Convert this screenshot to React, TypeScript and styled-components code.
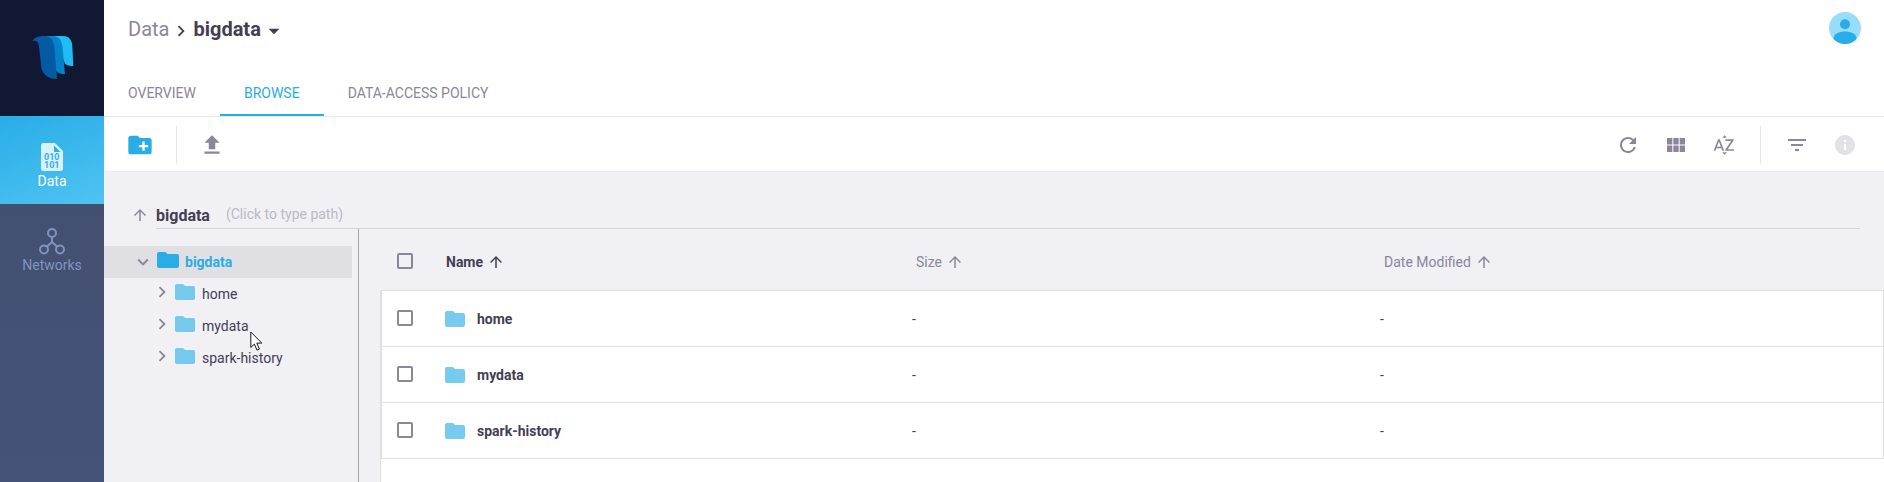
import React from "react";
import styled, { createGlobalStyle } from "styled-components";
import {
  MdArrowDropDown,
  MdArrowUpward,
  MdChevronRight,
  MdCreateNewFolder,
  MdExpandMore,
  MdFileUpload,
  MdFilterList,
  MdFolder,
  MdInfo,
  MdRefresh,
  MdSortByAlpha,
  MdViewModule,
} from "react-icons/md";

const color = {
  navy: "#111833",
  blue: "#28ade6",
  folder: "#74c9ec",
  text: "#433e53",
  muted: "#8b8698",
  faint: "#bbb9c5",
  line: "#dfdfe3",
  page: "#f0f0f5",
};

const GlobalStyle = createGlobalStyle`
  *, *::before, *::after { box-sizing: border-box; }
  body {
    margin: 0;
    background: ${color.page};
    color: ${color.text};
    font-family: Roboto, "Liberation Sans", sans-serif;
    font-size: 14px;
    line-height: 20px;
  }
  button { border: 0; padding: 0; background: none; color: inherit; font: inherit; cursor: pointer; }
  a { color: inherit; text-decoration: none; }
  svg { display: block; flex: none; }
`;

const Shell = styled.div`
  display: flex;
  min-height: 100vh;
`;

const Sidebar = styled.nav`
  flex: none;
  width: 104px;
  background: linear-gradient(180deg, #424f6e 30%, #455379 100%);
`;

const Brand = styled.a`
  display: flex;
  align-items: center;
  justify-content: center;
  height: 116px;
  padding-left: 2px;
  background: ${color.navy};
`;

const SideLink = styled.a<{ $active?: boolean }>`
  display: flex;
  flex-direction: column;
  align-items: center;
  justify-content: center;
  height: ${(p) => (p.$active ? 88 : 80)}px;
  padding-top: 14px;
  color: ${(p) => (p.$active ? "#fff" : "#8193bd")};
  background: ${(p) => (p.$active ? "linear-gradient(160deg, #28ade6, #4fc3f3)" : "none")};
`;

const Main = styled.main`
  display: flex;
  flex: 1;
  flex-direction: column;
  min-width: 0;
`;

const Header = styled.header`
  display: flex;
  flex-direction: column;
  justify-content: space-between;
  height: 117px;
  border-bottom: 1px solid #e9e9ec;
  background: #fff;
`;

const TitleRow = styled.div`
  display: flex;
  align-items: center;
  justify-content: space-between;
  height: 56px;
  padding: 0 23px 0 24px;
`;

const Breadcrumb = styled.div`
  display: flex;
  align-items: center;
  gap: 1px;
  padding-top: 1px;
  font-size: 20px;
  line-height: 28px;

  > svg { margin-top: 4px; }
`;

const Parent = styled.a`
  color: ${color.muted};
`;

const Current = styled.button`
  display: flex;
  align-items: center;
  font-weight: 700;

  svg { margin-top: 4px; }
`;

const Tabs = styled.nav`
  display: flex;
`;

const Tab = styled.a<{ $active?: boolean }>`
  height: 36px;
  padding: 3px 24px 0;
  border-bottom: 2px solid ${(p) => (p.$active ? color.blue : "transparent")};
  color: ${(p) => (p.$active ? color.blue : color.muted)};
`;

const Toolbar = styled.div`
  display: flex;
  align-items: center;
  justify-content: space-between;
  height: 55px;
  padding: 2px 27px 0 22px;
  border-bottom: 1px solid #ebebef;
  background: #fff;
`;

const ToolGroup = styled.div<{ $gap: number }>`
  display: flex;
  align-items: center;
  gap: ${(p) => p.$gap}px;
`;

const Tool = styled.button<{ $tint?: string }>`
  color: ${(p) => p.$tint || color.muted};
`;

const Divider = styled.span`
  width: 1px;
  height: 38px;
  background: #e6e6ea;
`;

const PathBar = styled.div`
  display: flex;
  height: 57px;
  padding: 0 24px 0 27px;
  gap: 7px;
`;

const UpButton = styled.button`
  align-self: flex-end;
  padding-bottom: 5px;
  color: ${color.muted};
`;

const PathField = styled.button`
  display: flex;
  flex: 1;
  align-items: flex-end;
  gap: 16px;
  border-bottom: 1px solid #d5d5da;
  text-align: left;
`;

const PathName = styled.span`
  padding-bottom: 2px;
  font-size: 16px;
  font-weight: 700;
`;

const PathHint = styled.span`
  padding-bottom: 4px;
  color: ${color.faint};
`;

const Split = styled.div`
  display: flex;
  flex: 1;
`;

const TreePane = styled.aside`
  flex: none;
  width: 255px;
  padding: 17px 6px 0 0;
  border-right: 1px solid #a4a2ae;
`;

const TreeRow = styled.button<{ $root?: boolean }>`
  display: flex;
  align-items: center;
  width: 100%;
  height: 32px;
  padding-left: ${(p) => (p.$root ? 28 : 47)}px;
  background: ${(p) => (p.$root ? "#e0e0e4" : "none")};
  color: ${(p) => (p.$root ? color.blue : color.text)};
  font-weight: ${(p) => (p.$root ? 700 : 400)};
`;

const TreeToggle = styled.span<{ $root?: boolean }>`
  margin-right: ${(p) => (p.$root ? 1 : 0)}px;
  padding-bottom: ${(p) => (p.$root ? 0 : 4)}px;
  color: ${color.muted};
`;

const TreeFolder = styled.span<{ $root?: boolean }>`
  margin-right: ${(p) => (p.$root ? 4 : 5)}px;
  padding-bottom: 4px;
  color: ${(p) => (p.$root ? color.blue : color.folder)};
`;

const ListPane = styled.section`
  display: flex;
  flex: 1;
  flex-direction: column;
  min-width: 0;
  padding-left: 21px;
`;

const Table = styled.table`
  width: 100%;
  table-layout: fixed;
  border-spacing: 0;

  th, td { padding: 0 0 0 14px; text-align: left; }
  th { height: 62px; padding-top: 4px; border-bottom: 1px solid ${color.line}; font-weight: 400; }
  td { height: 56px; border-bottom: 1px solid ${color.line}; background: #fff; }
  td:first-child { padding-left: 15px; border-left: 2px solid ${color.line}; }
  th:first-child { padding-left: 17px; }
  td:last-child { border-right: 1px solid ${color.line}; }
`;

const Filler = styled.div`
  flex: 1;
  border-left: 1px solid ${color.line};
  background: #fff;
`;

const CheckBox = styled.input`
  display: block;
  width: 16px;
  height: 16px;
  margin: 0 0 2px;
  border: 2px solid ${color.muted};
  border-radius: 2px;
  appearance: none;
`;

const SortButton = styled.button<{ $active?: boolean }>`
  display: flex;
  align-items: center;
  gap: 4px;
  padding-left: ${(p) => (p.$active ? 2 : 4)}px;
  color: ${(p) => (p.$active ? color.text : color.muted)};
  font-weight: ${(p) => (p.$active ? 700 : 400)};
`;

const FileLink = styled.a`
  display: flex;
  align-items: center;
  gap: 10px;
  margin-left: -1px;
  font-weight: 700;

  svg { color: #76cbee; }
`;

const Pointer = styled.svg`
  position: absolute;
  top: 331px;
  left: 250px;
  pointer-events: none;
`;

const Logo = () => (
  <svg width="42" height="44" viewBox="0 0 42 44" aria-hidden="true">
    <path d="M21 0h10c6 0 9 4 9.300 10l1 20c-5 .3-8-1-9-4z" fill="#1fbdf5" />
    <path d="M12 .5C14 0 18 0 21 0c6 0 9 5 9.500 11l2.500 27c-6 0-9-2-11-6z" fill="#0381c9" />
    <path d="M0 5C3 1 7 0 12 0c7 0 10 5 10.500 12L25 43C15 43 9 37 9 28L7 11C6.600 6 5 4 0 5z" fill="#045ba3" />
  </svg>
);

const DataIcon = () => (
  <svg width="22" height="28" viewBox="0 0 22 28" aria-hidden="true">
    <path d="M2.500 0H14l8 8v17.500a2.500 2.500 0 0 1-2.500 2.500h-17A2.500 2.500 0 0 1 0 25.500v-23A2.500 2.500 0 0 1 2.500 0z" fill="#d9f1fc" />
    <path d="M13 2.500 19.500 9H13z" fill="#2eb1e8" />
    <g fill="#31b2e9" fontFamily="Roboto, sans-serif" fontWeight="700" fontSize="9">
      <text x="3" y="17">010</text>
      <text x="3" y="25">101</text>
    </g>
  </svg>
);

const NetworkIcon = () => (
  <svg width="26" height="27" viewBox="0 0 26 27" fill="none" stroke="currentColor" strokeWidth="2" aria-hidden="true">
    <circle cx="13" cy="5" r="4" />
    <circle cx="5" cy="21.500" r="4" />
    <circle cx="21" cy="21.500" r="4" />
    <path d="M13 9v5.500M8 18.500l5-4.500 5 4.500" />
  </svg>
);

const Avatar = () => (
  <svg width="32" height="32" viewBox="0 0 32 32" aria-hidden="true">
    <circle cx="16" cy="16" r="16" fill="#97dcf8" />
    <circle cx="16" cy="12.300" r="5" fill="#28ade6" />
    <path d="M4.500 27C4.500 22 10 19.600 16 19.600S27.600 22 27.600 27A16 16 0 0 1 4.500 27z" fill="#28ade6" />
  </svg>
);

const RootFolder = () => (
  <svg width="26" height="24" viewBox="0 0 26 24" fill="currentColor" aria-hidden="true">
    <path d="M4 4h6.500l2 2H22a2 2 0 0 1 2 2v10a2 2 0 0 1-2 2H4a2 2 0 0 1-2-2V6a2 2 0 0 1 2-2z" />
  </svg>
);

const folders = ["home", "mydata", "spark-history"];

export default function App() {
  return (
    <>
      <GlobalStyle />
      <Shell>
        <Sidebar>
          <Brand href="#" aria-label="Dashboard"><Logo /></Brand>
          <SideLink href="#data" $active><DataIcon />Data</SideLink>
          <SideLink href="#networks"><NetworkIcon />Networks</SideLink>
        </Sidebar>
        <Main>
          <Header>
            <TitleRow>
              <Breadcrumb>
                <Parent href="#data">Data</Parent>
                <MdChevronRight size={22} />
                <Current>bigdata<MdArrowDropDown size={26} /></Current>
              </Breadcrumb>
              <button aria-label="Account"><Avatar /></button>
            </TitleRow>
            <Tabs>
              <Tab href="#overview">OVERVIEW</Tab>
              <Tab href="#browse" $active>BROWSE</Tab>
              <Tab href="#policy">DATA-ACCESS POLICY</Tab>
            </Tabs>
          </Header>
          <Toolbar>
            <ToolGroup $gap={22}>
              <Tool aria-label="New folder" $tint={color.blue}><MdCreateNewFolder size={28} /></Tool>
              <Divider />
              <Tool aria-label="Upload"><MdFileUpload size={26} /></Tool>
            </ToolGroup>
            <ToolGroup $gap={24}>
              <Tool aria-label="Refresh"><MdRefresh size={24} /></Tool>
              <Tool aria-label="Grid view"><MdViewModule size={24} /></Tool>
              <Tool aria-label="Sort by name"><MdSortByAlpha size={24} /></Tool>
              <Divider />
              <Tool aria-label="Filter"><MdFilterList size={24} /></Tool>
              <Tool aria-label="Details" $tint="#e2e2e6"><MdInfo size={24} /></Tool>
            </ToolGroup>
          </Toolbar>
          <PathBar>
            <UpButton aria-label="Up one level"><MdArrowUpward size={18} /></UpButton>
            <PathField>
              <PathName>bigdata</PathName>
              <PathHint>(Click to type path)</PathHint>
            </PathField>
          </PathBar>
          <Split>
            <TreePane>
              <TreeRow $root>
                <TreeToggle $root><MdExpandMore size={22} /></TreeToggle>
                <TreeFolder $root><RootFolder /></TreeFolder>
                bigdata
              </TreeRow>
              {folders.map((name) => (
                <TreeRow key={name}>
                  <TreeToggle><MdChevronRight size={22} /></TreeToggle>
                  <TreeFolder><MdFolder size={24} /></TreeFolder>
                  {name}
                </TreeRow>
              ))}
            </TreePane>
            <ListPane>
              <Table>
                <colgroup>
                  <col style={{ width: 50 }} />
                  <col />
                  <col />
                  <col />
                  <col style={{ width: 50 }} />
                </colgroup>
                <thead>
                  <tr>
                    <th><CheckBox type="checkbox" aria-label="Select all" /></th>
                    <th><SortButton $active>Name<MdArrowUpward size={18} /></SortButton></th>
                    <th><SortButton>Size<MdArrowUpward size={18} /></SortButton></th>
                    <th><SortButton>Date Modified<MdArrowUpward size={18} /></SortButton></th>
                    <th />
                  </tr>
                </thead>
                <tbody>
                  {folders.map((name) => (
                    <tr key={name}>
                      <td><CheckBox type="checkbox" aria-label={`Select ${name}`} /></td>
                      <td><FileLink href={`#${name}`}><MdFolder size={24} />{name}</FileLink></td>
                      <td>-</td>
                      <td>-</td>
                      <td />
                    </tr>
                  ))}
                </tbody>
              </Table>
              <Filler />
            </ListPane>
          </Split>
        </Main>
      </Shell>
      <Pointer width="13" height="20" viewBox="0 0 13 20" aria-hidden="true">
        <path d="M.8 1v15.500l3.600-3.400 2.600 6 2.400-1-2.600-6h5z" fill="#fff" stroke="#16142a" />
      </Pointer>
    </>
  );
}
